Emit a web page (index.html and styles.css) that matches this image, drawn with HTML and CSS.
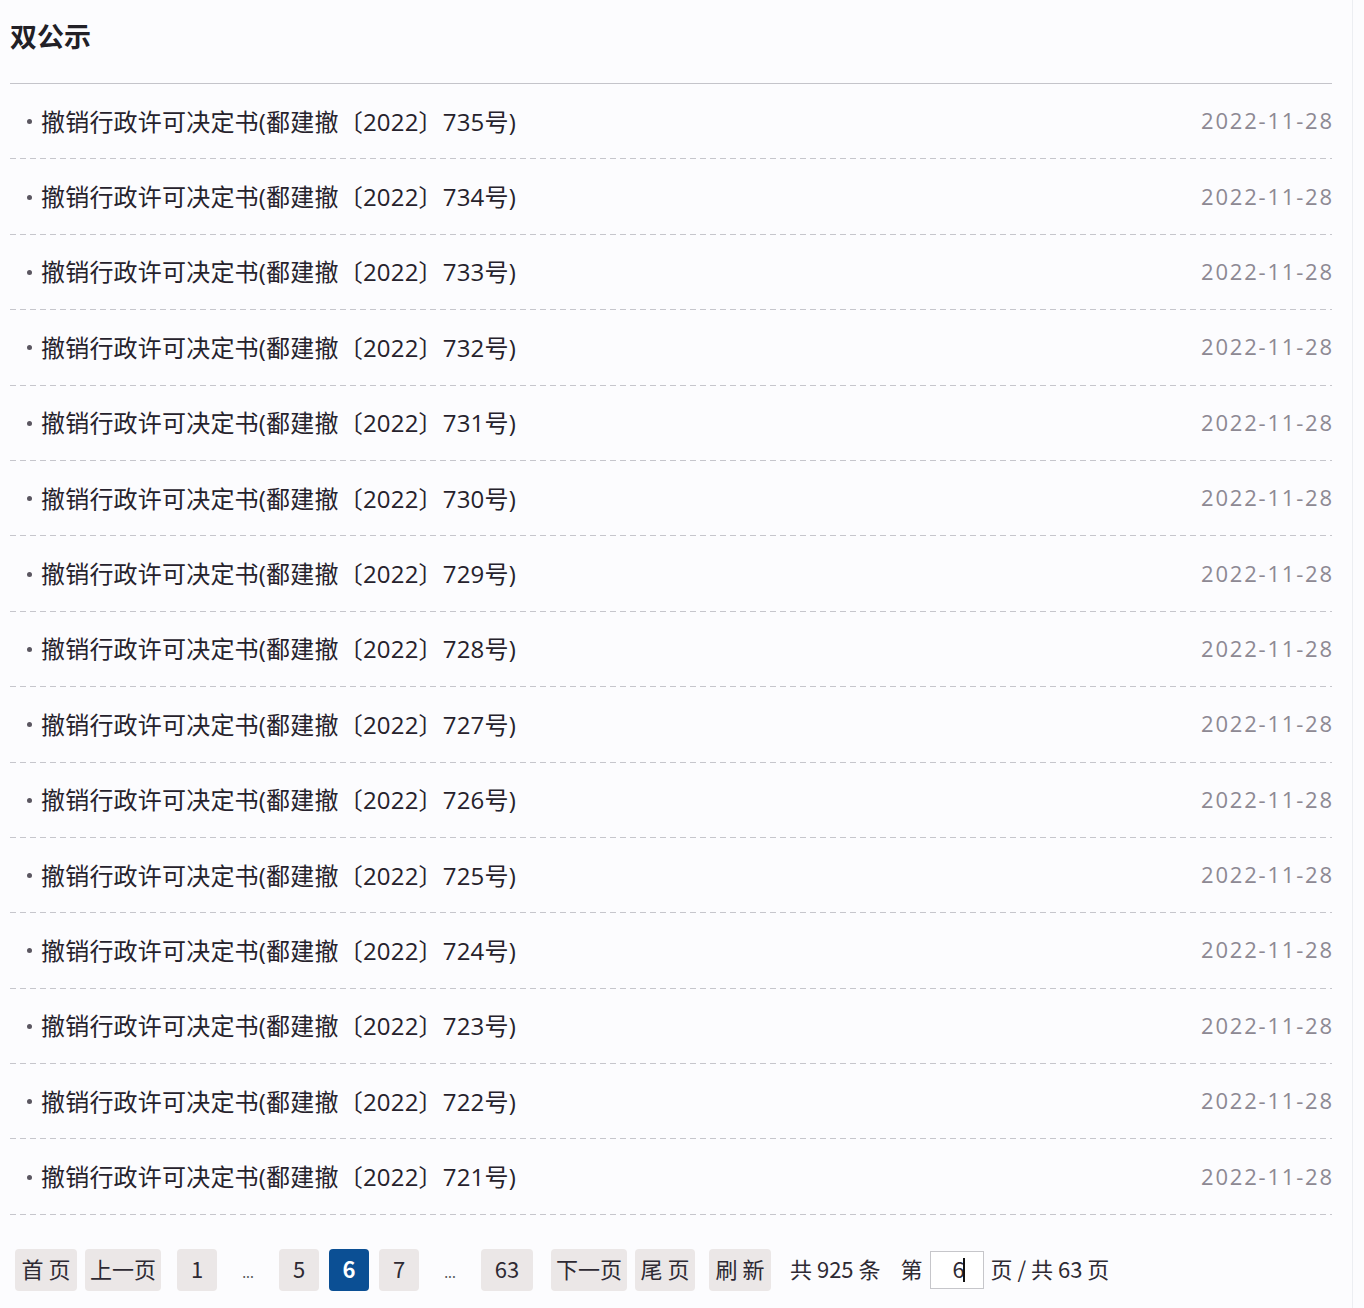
FILE: index.html
```html
<!DOCTYPE html>
<html lang="zh-CN">
<head>
<meta charset="utf-8">
<title>双公示</title>
<link rel="stylesheet" href="styles.css">
</head>
<body>
<div class="page">
  <div class="header"><h1 class="title">双公示</h1></div>
  <ul class="list">
    <li class="row"><span class="item">撤销行政许可决定书(鄱建撤〔2022〕735号)</span><span class="date">2022-11-28</span></li>
    <li class="row"><span class="item">撤销行政许可决定书(鄱建撤〔2022〕734号)</span><span class="date">2022-11-28</span></li>
    <li class="row"><span class="item">撤销行政许可决定书(鄱建撤〔2022〕733号)</span><span class="date">2022-11-28</span></li>
    <li class="row"><span class="item">撤销行政许可决定书(鄱建撤〔2022〕732号)</span><span class="date">2022-11-28</span></li>
    <li class="row"><span class="item">撤销行政许可决定书(鄱建撤〔2022〕731号)</span><span class="date">2022-11-28</span></li>
    <li class="row"><span class="item">撤销行政许可决定书(鄱建撤〔2022〕730号)</span><span class="date">2022-11-28</span></li>
    <li class="row"><span class="item">撤销行政许可决定书(鄱建撤〔2022〕729号)</span><span class="date">2022-11-28</span></li>
    <li class="row"><span class="item">撤销行政许可决定书(鄱建撤〔2022〕728号)</span><span class="date">2022-11-28</span></li>
    <li class="row"><span class="item">撤销行政许可决定书(鄱建撤〔2022〕727号)</span><span class="date">2022-11-28</span></li>
    <li class="row"><span class="item">撤销行政许可决定书(鄱建撤〔2022〕726号)</span><span class="date">2022-11-28</span></li>
    <li class="row"><span class="item">撤销行政许可决定书(鄱建撤〔2022〕725号)</span><span class="date">2022-11-28</span></li>
    <li class="row"><span class="item">撤销行政许可决定书(鄱建撤〔2022〕724号)</span><span class="date">2022-11-28</span></li>
    <li class="row"><span class="item">撤销行政许可决定书(鄱建撤〔2022〕723号)</span><span class="date">2022-11-28</span></li>
    <li class="row"><span class="item">撤销行政许可决定书(鄱建撤〔2022〕722号)</span><span class="date">2022-11-28</span></li>
    <li class="row"><span class="item">撤销行政许可决定书(鄱建撤〔2022〕721号)</span><span class="date">2022-11-28</span></li>
  </ul>
  <div class="pager">
    <span class="btn w62 sp">首页</span>
    <span class="btn w76 ml8">上一页</span>
    <span class="btn w40 ml16">1</span>
    <span class="dots">...</span>
    <span class="btn w40">5</span>
    <span class="btn w40 ml10 active">6</span>
    <span class="btn w40 ml10">7</span>
    <span class="dots">...</span>
    <span class="btn w52">63</span>
    <span class="btn w76 ml18">下一页</span>
    <span class="btn w60 ml8 sp">尾页</span>
    <span class="btn w62 ml14 sp">刷新</span>
    <span class="info ml19">共 925 条</span>
    <span class="info ml20">第</span>
    <span class="jump ml7">6<span class="caret"></span></span>
    <span class="info ml7">页 / 共 63 页</span>
  </div>
</div>
</body>
</html>
```

FILE: styles.css
```css
html, body {
  margin: 0;
  padding: 0;
  background: #fcfcfe;
}
body {
  font-family: "Noto Sans CJK SC", "Noto Sans", sans-serif;
  color: #2a2630;
}
.page {
  width: 1353px;
  min-height: 1308px;
  border-right: 1px solid #eceef2;
  box-sizing: border-box;
  padding: 0 20px 0 10px;
}
.header {
  height: 84px;
  border-bottom: 1px solid #c4c4ca;
  box-sizing: border-box;
  display: flex;
  align-items: center;
}
.title {
  margin: 0 0 12px 0;
  font-size: 27px;
  font-weight: 700;
  color: #222026;
  line-height: 1;
}
.list {
  list-style: none;
  margin: 0;
  padding: 0;
}
.row {
  height: 75.4px;
  box-sizing: border-box;
  padding: 0 0 3px 17px;
  display: flex;
  align-items: center;
  justify-content: space-between;
  background-image: linear-gradient(to right, #c6c6cc 6px, transparent 6px);
  background-size: 10px 1px;
  background-repeat: repeat-x;
  background-position: left bottom;
}
.item {
  font-family: "Open Sans", "Noto Sans CJK SC", sans-serif;
  font-size: 24px;
  color: #26222c;
  display: flex;
  align-items: center;
  letter-spacing: 0.2px;
}
.item::before {
  content: "";
  width: 5px;
  height: 5px;
  border-radius: 50%;
  background: #5a5660;
  margin-right: 9px;
  margin-top: 3px;
}
.date {
  font-family: "Open Sans", "Noto Sans", sans-serif;
  font-size: 22px;
  letter-spacing: 1.8px;
  margin-right: -1.8px;
  color: #8d8993;
}
.pager {
  display: flex;
  align-items: center;
  padding: 34px 0 0 5px;
}
.btn {
  height: 42px;
  border-radius: 4px;
  background: #ebe7e7;
  display: flex;
  align-items: center;
  justify-content: center;
  font-size: 22px;
  color: #2e2a33;
  box-sizing: border-box;
  padding-bottom: 3px;
}
.btn.sp { letter-spacing: 5px; text-indent: 5px; }
.btn.active {
  background: #0b4f94;
  color: #ffffff;
  font-weight: 700;
}
.w40 { width: 40px; }
.w52 { width: 52px; }
.w60 { width: 60px; }
.w62 { width: 62px; }
.w76 { width: 76px; }
.ml7 { margin-left: 7px; }
.ml8 { margin-left: 8px; }
.ml10 { margin-left: 10px; }
.ml14 { margin-left: 14px; }
.ml16 { margin-left: 16px; }
.ml18 { margin-left: 18px; }
.ml19 { margin-left: 19px; }
.ml20 { margin-left: 20px; }
.dots {
  width: 62px;
  text-align: center;
  font-size: 14px;
  color: #555;
  padding-top: 4px;
}
.info {
  font-size: 22px;
  color: #2e2a33;
  padding-bottom: 3px;
}
.jump {
  width: 54px;
  height: 38px;
  box-sizing: border-box;
  border: 1px solid #c6c6ca;
  background: #ffffff;
  display: flex;
  align-items: center;
  justify-content: center;
  font-size: 22px;
  color: #2e2a33;
  padding: 0 0 3px 4px;
}
.caret {
  display: inline-block;
  width: 2px;
  height: 24px;
  background: #111;
  margin-left: -2px;
  margin-top: 3px;
}
```
